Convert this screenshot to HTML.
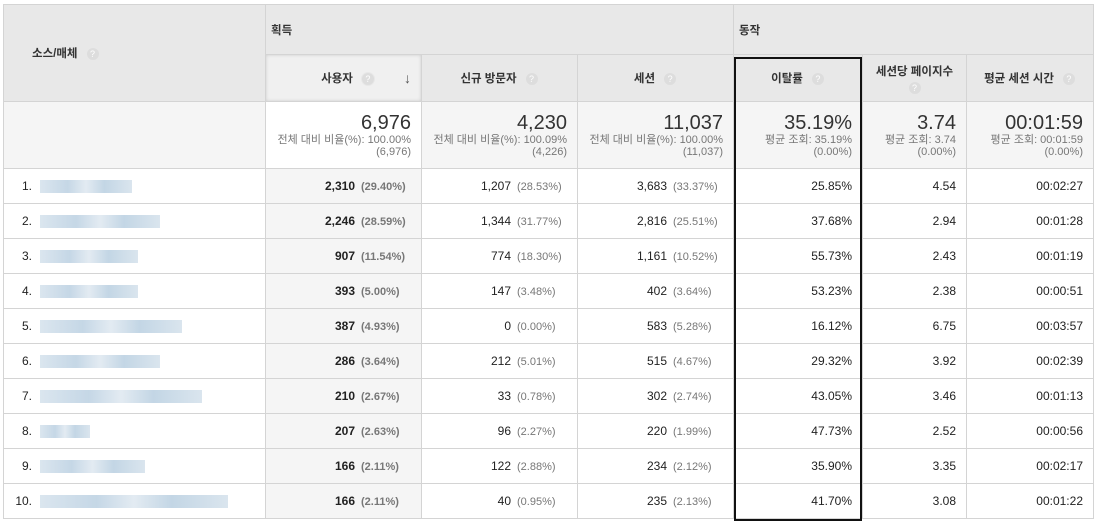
<!DOCTYPE html><html><head><meta charset="utf-8"><style>
body{margin:0;width:1095px;height:523px;background:#fff;overflow:hidden;font-family:"Liberation Sans","Noto Sans CJK KR",sans-serif;color:#222;position:relative}
table{position:absolute;left:3px;top:4px;border-collapse:collapse;table-layout:fixed;width:1090px}
td{border:1px solid #d4d4d4;padding:0 10px;font-size:12px;overflow:hidden;white-space:nowrap}
.h{background:#e8e8e8;font-weight:bold;font-size:11.5px;color:#333}
.q{display:inline-block;width:12px;height:12px;border-radius:50%;background:#ddd;color:#fff;font-size:9px;line-height:12px;text-align:center;font-weight:normal;margin-left:8px;vertical-align:middle;border:1px solid #e8e8e8}
.r{text-align:right}
.big{font-size:20px;color:#333;line-height:21px}
.sm{font-size:11px;color:#777;line-height:12px}
.sum td{background:#f5f5f5;vertical-align:top;padding-top:11px}
.d td{height:34px;font-size:12px;color:#222}
.d td.u{background:#f5f5f5}
.p{color:#777;font-size:11px;display:inline-block;width:50px;text-align:left;margin-left:6px}
.b{font-weight:bold}
.bl{display:inline-block;height:13px;vertical-align:middle;margin-left:8px;background:linear-gradient(90deg,#dbe6ef,#c5d7e6 30%,#e3ebf2 50%,#c3d6e5 70%,#dae5ee)}
.n{display:inline-block;width:18px;text-align:right}
</style></head><body>
<table>
<colgroup><col style="width:262px"><col style="width:156px"><col style="width:156px"><col style="width:156px"><col style="width:129px"><col style="width:104px"><col style="width:127px"></colgroup>
<tr style="height:50px"><td class="h" rowspan="2" style="padding-left:28px;height:96px">소스/매체<span class="q">?</span></td><td class="h" colspan="3" style="padding-left:5px">획득</td><td class="h" colspan="3" style="padding-left:5px">동작</td></tr>
<tr style="height:47px"><td class="h" style="background:#f0f0f0;text-align:center;box-shadow:inset 0 0 3px #ccc">&nbsp;&nbsp;&nbsp;&nbsp;&nbsp;사용자<span class="q">?</span><span style="float:right;font-size:14px;color:#555">↓</span></td><td class="h" style="text-align:center">신규 방문자<span class="q">?</span></td><td class="h" style="text-align:center">세션<span class="q">?</span></td><td class="h" style="text-align:center">이탈률<span class="q">?</span></td><td class="h" style="text-align:center;vertical-align:top;padding-top:8px">세션당 페이지수<br><span class="q" style="margin:2px 0 0">?</span></td><td class="h" style="text-align:center">평균 세션 시간<span class="q">?</span></td></tr>
<tr class="sum" style="height:67px"><td></td>
<td class="r" style="background:#fff"><div class="big">6,976</div><div class="sm">전체 대비 비율(%): 100.00%<br>(6,976)</div></td>
<td class="r"><div class="big">4,230</div><div class="sm">전체 대비 비율(%): 100.09%<br>(4,226)</div></td>
<td class="r"><div class="big">11,037</div><div class="sm">전체 대비 비율(%): 100.00%<br>(11,037)</div></td>
<td class="r"><div class="big">35.19%</div><div class="sm">평균 조회: 35.19%<br>(0.00%)</div></td>
<td class="r"><div class="big">3.74</div><div class="sm">평균 조회: 3.74<br>(0.00%)</div></td>
<td class="r"><div class="big">00:01:59</div><div class="sm">평균 조회: 00:01:59<br>(0.00%)</div></td></tr>
<tr class="d"><td><span class="n">1.</span><span class="bl" style="width:92px"></span></td><td class="r u"><span class="b">2,310</span><span class="p b">(29.40%)</span></td><td class="r">1,207<span class="p">(28.53%)</span></td><td class="r">3,683<span class="p">(33.37%)</span></td><td class="r">25.85%</td><td class="r">4.54</td><td class="r">00:02:27</td></tr>
<tr class="d"><td><span class="n">2.</span><span class="bl" style="width:120px"></span></td><td class="r u"><span class="b">2,246</span><span class="p b">(28.59%)</span></td><td class="r">1,344<span class="p">(31.77%)</span></td><td class="r">2,816<span class="p">(25.51%)</span></td><td class="r">37.68%</td><td class="r">2.94</td><td class="r">00:01:28</td></tr>
<tr class="d"><td><span class="n">3.</span><span class="bl" style="width:98px"></span></td><td class="r u"><span class="b">907</span><span class="p b">(11.54%)</span></td><td class="r">774<span class="p">(18.30%)</span></td><td class="r">1,161<span class="p">(10.52%)</span></td><td class="r">55.73%</td><td class="r">2.43</td><td class="r">00:01:19</td></tr>
<tr class="d"><td><span class="n">4.</span><span class="bl" style="width:98px"></span></td><td class="r u"><span class="b">393</span><span class="p b">(5.00%)</span></td><td class="r">147<span class="p">(3.48%)</span></td><td class="r">402<span class="p">(3.64%)</span></td><td class="r">53.23%</td><td class="r">2.38</td><td class="r">00:00:51</td></tr>
<tr class="d"><td><span class="n">5.</span><span class="bl" style="width:142px"></span></td><td class="r u"><span class="b">387</span><span class="p b">(4.93%)</span></td><td class="r">0<span class="p">(0.00%)</span></td><td class="r">583<span class="p">(5.28%)</span></td><td class="r">16.12%</td><td class="r">6.75</td><td class="r">00:03:57</td></tr>
<tr class="d"><td><span class="n">6.</span><span class="bl" style="width:120px"></span></td><td class="r u"><span class="b">286</span><span class="p b">(3.64%)</span></td><td class="r">212<span class="p">(5.01%)</span></td><td class="r">515<span class="p">(4.67%)</span></td><td class="r">29.32%</td><td class="r">3.92</td><td class="r">00:02:39</td></tr>
<tr class="d"><td><span class="n">7.</span><span class="bl" style="width:162px"></span></td><td class="r u"><span class="b">210</span><span class="p b">(2.67%)</span></td><td class="r">33<span class="p">(0.78%)</span></td><td class="r">302<span class="p">(2.74%)</span></td><td class="r">43.05%</td><td class="r">3.46</td><td class="r">00:01:13</td></tr>
<tr class="d"><td><span class="n">8.</span><span class="bl" style="width:50px"></span></td><td class="r u"><span class="b">207</span><span class="p b">(2.63%)</span></td><td class="r">96<span class="p">(2.27%)</span></td><td class="r">220<span class="p">(1.99%)</span></td><td class="r">47.73%</td><td class="r">2.52</td><td class="r">00:00:56</td></tr>
<tr class="d"><td><span class="n">9.</span><span class="bl" style="width:105px"></span></td><td class="r u"><span class="b">166</span><span class="p b">(2.11%)</span></td><td class="r">122<span class="p">(2.88%)</span></td><td class="r">234<span class="p">(2.12%)</span></td><td class="r">35.90%</td><td class="r">3.35</td><td class="r">00:02:17</td></tr>
<tr class="d"><td><span class="n">10.</span><span class="bl" style="width:188px"></span></td><td class="r u"><span class="b">166</span><span class="p b">(2.11%)</span></td><td class="r">40<span class="p">(0.95%)</span></td><td class="r">235<span class="p">(2.13%)</span></td><td class="r">41.70%</td><td class="r">3.08</td><td class="r">00:01:22</td></tr>
</table>
<div style="position:absolute;left:734px;top:57px;width:124px;height:460px;border:2px solid #111"></div>
</body></html>
